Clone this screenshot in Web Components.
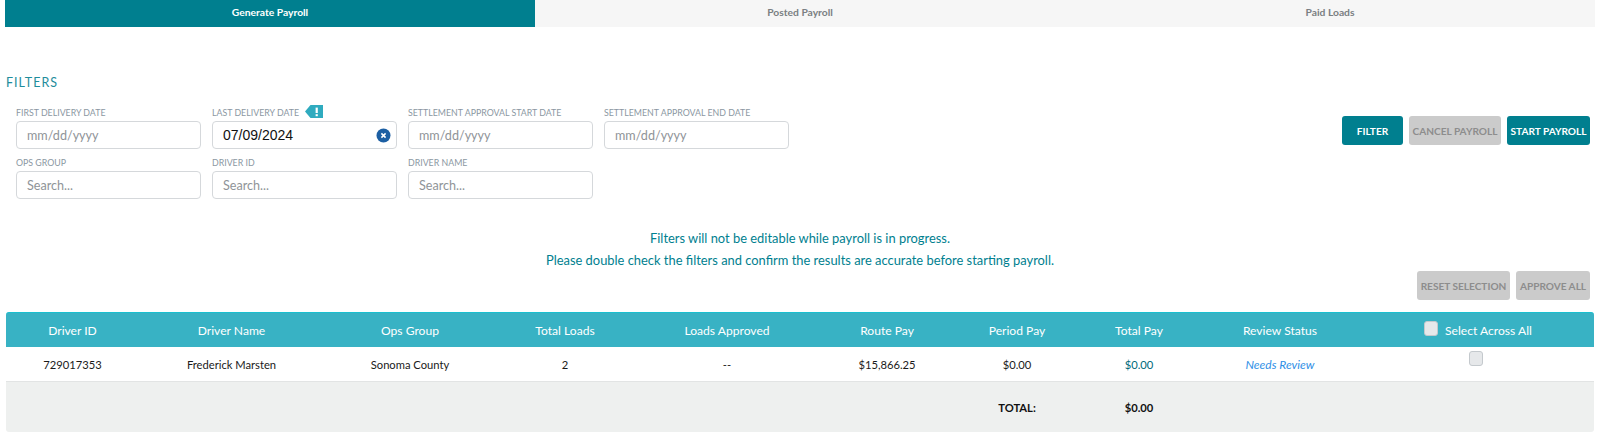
<!DOCTYPE html>
<html>
<head>
<meta charset="utf-8">
<title>Payroll</title>
<style>
  html, body { margin: 0; background: #fff; font-family: Lato, "Liberation Sans", sans-serif; }
</style>
</head>
<body>
<payroll-page></payroll-page>
<script>
class PayTab extends HTMLElement {
  constructor() {
    super();
    this.attachShadow({ mode: "open" });
    this.shadowRoot.innerHTML = `
      <style>
        :host {
          display: flex;
          flex: 1;
          align-items: center;
          justify-content: center;
          box-sizing: border-box;
          height: 27px;
          padding-bottom: 4px;
          background: #f6f6f6;
          color: #7a7f82;
          font-size: 10.3px;
          font-weight: 700;
        }
        :host([active]) {
          background: #007f8f;
          color: #fff;
        }
      </style>
      <slot></slot>
    `;
  }
}

class PayButton extends HTMLElement {
  constructor() {
    super();
    this.attachShadow({ mode: "open" });
    this.shadowRoot.innerHTML = `
      <style>
        :host {
          display: flex;
          align-items: center;
          justify-content: center;
          box-sizing: border-box;
          height: 29px;
          border-radius: 3px;
          background: #007f8f;
          color: #fff;
          font-size: 10.1px;
          font-weight: 700;
          white-space: nowrap;
        }
        :host([disabled]) {
          background: #cbcbcb;
          color: #8d8d8d;
        }
      </style>
      <slot></slot>
    `;
  }
}

class FilterField extends HTMLElement {
  constructor() {
    super();
    this.attachShadow({ mode: "open" });
    this.shadowRoot.innerHTML = `
      <style>
        :host { display: block; width: 185px; }
        .label {
          display: flex;
          align-items: center;
          gap: 6px;
          box-sizing: border-box;
          height: 16px;
          padding-bottom: 1px;
          color: #8b97a2;
          font-size: 8.8px;
          text-transform: uppercase;
          white-space: nowrap;
        }
        .box {
          display: flex;
          align-items: center;
          justify-content: space-between;
          box-sizing: border-box;
          height: 28px;
          padding: 0 5px 0 10px;
          border: 1px solid #d5d8db;
          border-radius: 4px;
          background: #fff;
          color: #8f9498;
          font-size: 12.6px;
        }
        :host([filled]) .box {
          color: #111;
          font-family: "Liberation Sans", sans-serif;
          font-size: 14px;
        }
        .flag, .clear { display: none; }
        .flag { margin-top: -2px; }
        :host([filled]) .flag, :host([filled]) .clear { display: block; }
      </style>
      <div class="label">
        <span id="label"></span>
        <svg class="flag" width="18" height="13" viewBox="0 0 18 13">
          <path d="M0 6.5 L5.5 0 H18 V13 H5.5 Z" fill="#2fabbf"/>
          <rect x="10.6" y="2.6" width="2.2" height="5.4" fill="#fff"/>
          <rect x="10.6" y="9.2" width="2.2" height="2" fill="#fff"/>
        </svg>
      </div>
      <div class="box">
        <span id="value"></span>
        <svg class="clear" width="15" height="15" viewBox="0 0 15 15">
          <circle cx="7.5" cy="7.5" r="7" fill="#1c5fa3"/>
          <path d="M5.4 5.4 L9.6 9.6 M9.6 5.4 L5.4 9.6" stroke="#fff" stroke-width="1.5" fill="none"/>
        </svg>
      </div>
    `;
  }

  connectedCallback() {
    this.shadowRoot.querySelector("#label").textContent = this.getAttribute("label");
    this.shadowRoot.querySelector("#value").textContent = this.getAttribute("value");
  }
}

class PayCheck extends HTMLElement {
  constructor() {
    super();
    this.attachShadow({ mode: "open" });
    this.shadowRoot.innerHTML = `
      <style>
        :host {
          display: inline-block;
          box-sizing: border-box;
          width: 14px;
          height: 15px;
          border: 1px solid #c4c9cd;
          border-radius: 3px;
          background: #e6e8ea;
        }
      </style>
    `;
  }
}

class PayrollRow extends HTMLElement {
  constructor() {
    super();
    this.attachShadow({ mode: "open" });
    this.shadowRoot.innerHTML = `
      <style>
        :host {
          display: grid;
          grid-template-columns: 133px 185px 172px 138px 186px 134px 126px 118px 164px 1fr;
          align-items: center;
          justify-items: center;
          height: 34px;
          border-bottom: 1px solid #e2e4e4;
          color: #1a1a1a;
          font-size: 11.2px;
        }
        :host([type="head"]) {
          height: 34px;
          border: 0;
          border-top: 1px solid #19bfcf;
          border-radius: 3px 3px 0 0;
          background: #38b2c4;
          color: #fff;
          font-size: 12.1px;
        }
        :host([type="total"]) {
          height: 50px;
          border: 0;
          border-radius: 0 0 3px 3px;
          background: #eef0ef;
          color: #111;
        }
      </style>
      <slot></slot>
    `;
  }
}

class PayrollPage extends HTMLElement {
  constructor() {
    super();
    this.attachShadow({ mode: "open" });
    this.shadowRoot.innerHTML = `
      <style>
        :host {
          display: block;
          height: 436px;
          overflow: hidden;
          font-family: Lato, "Liberation Sans", sans-serif;
        }
        .tabs { display: flex; margin: 0 5px; }
        main { padding: 0 6px; }
        h2 {
          margin: 48px 0 0;
          color: #1e8d9c;
          font-size: 12.5px;
          font-weight: 400;
          line-height: 16px;
          letter-spacing: 1px;
        }
        .filters {
          display: flex;
          justify-content: space-between;
          align-items: flex-start;
          margin-top: 14px;
          padding: 0 4px 0 10px;
        }
        .fields { display: grid; grid-template-columns: repeat(4, 185px); gap: 6px 11px; }
        .actions { display: flex; gap: 6px; }
        .top-actions { margin-top: 11px; }
        .notice {
          margin-top: 28px;
          color: #00808f;
          font-size: 12.9px;
          line-height: 22px;
          text-align: center;
        }
        .bottom-actions { justify-content: flex-end; padding-right: 4px; }
        .table { margin-top: 12px; }
        .check-head { display: flex; align-items: center; gap: 7px; }
        .check-head pay-check { position: relative; top: -2px; }
        .row-check { position: relative; top: -6px; height: 15px; padding-right: 5px; }
        .link { color: #2f8fe6; font-style: italic; font-size: 12px; }
        .money { color: #00697a; }
        b { font-weight: 700; }
      </style>
      <div class="tabs">
        <pay-tab active>Generate Payroll</pay-tab>
        <pay-tab>Posted Payroll</pay-tab>
        <pay-tab>Paid Loads</pay-tab>
      </div>
      <main>
        <h2>FILTERS</h2>
        <div class="filters">
          <div class="fields">
            <filter-field label="First Delivery Date" value="mm/dd/yyyy"></filter-field>
            <filter-field label="Last Delivery Date" value="07/09/2024" filled></filter-field>
            <filter-field label="Settlement Approval Start Date" value="mm/dd/yyyy"></filter-field>
            <filter-field label="Settlement Approval End Date" value="mm/dd/yyyy"></filter-field>
            <filter-field label="Ops Group" value="Search..."></filter-field>
            <filter-field label="Driver ID" value="Search..."></filter-field>
            <filter-field label="Driver Name" value="Search..."></filter-field>
          </div>
          <div class="actions top-actions">
            <pay-button style="width:61px">FILTER</pay-button>
            <pay-button style="width:92px" disabled>CANCEL PAYROLL</pay-button>
            <pay-button style="width:83px">START PAYROLL</pay-button>
          </div>
        </div>
        <div class="notice">
          <div>Filters will not be editable while payroll is in progress.</div>
          <div>Please double check the filters and confirm the results are accurate before starting payroll.</div>
        </div>
        <div class="actions bottom-actions">
          <pay-button style="width:93px" disabled>RESET SELECTION</pay-button>
          <pay-button style="width:74px" disabled>APPROVE ALL</pay-button>
        </div>
        <div class="table">
          <payroll-row type="head">
            <span>Driver ID</span><span>Driver Name</span><span>Ops Group</span><span>Total Loads</span>
            <span>Loads Approved</span><span>Route Pay</span><span>Period Pay</span><span>Total Pay</span>
            <span>Review Status</span>
            <span class="check-head"><pay-check></pay-check><span>Select Across All</span></span>
          </payroll-row>
          <payroll-row>
            <span>729017353</span><span>Frederick Marsten</span><span>Sonoma County</span><span>2</span>
            <span>--</span><span>$15,866.25</span><span>$0.00</span><span class="money">$0.00</span>
            <span class="link">Needs Review</span>
            <span class="row-check"><pay-check></pay-check></span>
          </payroll-row>
          <payroll-row type="total">
            <span></span><span></span><span></span><span></span><span></span><span></span>
            <b>TOTAL:</b><b>$0.00</b><span></span><span></span>
          </payroll-row>
        </div>
      </main>
    `;
  }
}

customElements.define("pay-tab", PayTab);
customElements.define("pay-button", PayButton);
customElements.define("filter-field", FilterField);
customElements.define("pay-check", PayCheck);
customElements.define("payroll-row", PayrollRow);
customElements.define("payroll-page", PayrollPage);
</script>
</body>
</html>
